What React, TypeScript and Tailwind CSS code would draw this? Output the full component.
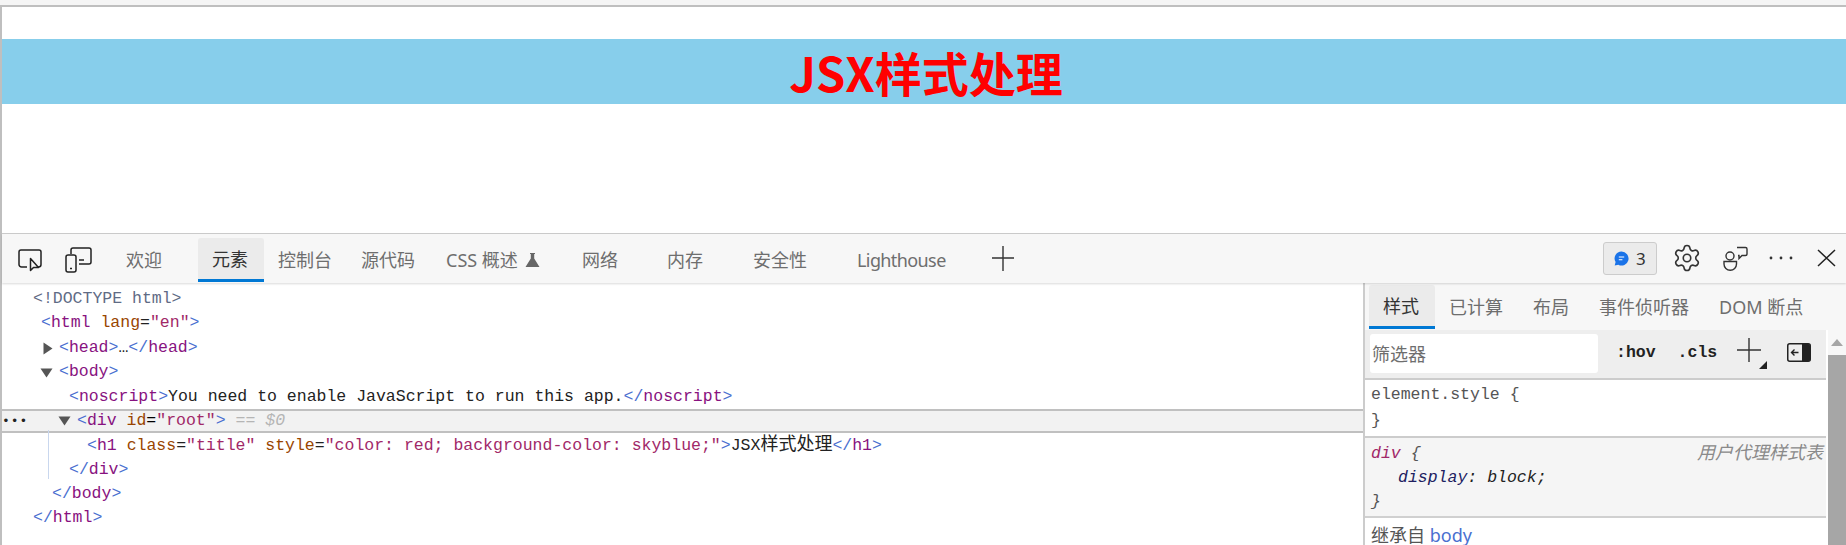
import { Settings } from "lucide-react";

const cjkSans = "font-['Segoe_UI','Noto_Sans','Noto_Sans_CJK_SC',sans-serif]";
const B = ({ children }: { children: React.ReactNode }) => <span className="text-[#4a6fd0]">{children}</span>;
const N = ({ children }: { children: React.ReactNode }) => <span className="text-[#881280]">{children}</span>;
const A = ({ children }: { children: React.ReactNode }) => <span className="text-[#994500]">{children}</span>;
const V = ({ children }: { children: React.ReactNode }) => <span className="text-[#a12868]">{children}</span>;

const Down = () => (
  <svg width="13" height="10" viewBox="0 0 13 10" className="shrink-0"><path d="M0.5 0.5H12.5L6.5 9.5Z" fill="#555" /></svg>
);
const Right = () => (
  <svg width="10" height="13" viewBox="0 0 10 13" className="shrink-0"><path d="M0.5 0.5V12.5L9.5 6.5Z" fill="#555" /></svg>
);

function Tab({ label, w, active, children }: { label: string; w: string; active?: boolean; children?: React.ReactNode }) {
  return (
    <div className={`${w} ${active ? "bg-[#ebebeb] text-[#333] border-b-[3px] border-[#0078d4] rounded-t-[3px]" : "text-[#6e6e6e]"} h-[44px] pl-[14px] flex items-center text-[18px] leading-none whitespace-nowrap`}>
      {label}
      {children}
    </div>
  );
}

function CodeLine({ pad, children }: { pad: string; children: React.ReactNode }) {
  return <div className={`${pad} h-[24.45px] flex items-center whitespace-pre text-[16.5px] leading-none text-[#222]`}>{children}</div>;
}

export default function App() {
  return (
    <div className={`w-[1846px] h-[545px] overflow-hidden bg-white flex flex-col ${cjkSans}`}>
      <div className="h-[5px] bg-[#f5f5f5]" />
      <div className="h-[2px] bg-[#bfbfbf]" />
      <div className="flex-1 min-h-0 flex flex-col border-l-2 border-[#bfbfbf]">
        <div className="h-[226px] pt-[32px] shrink-0">
          <h1 className="h-[65px] bg-[#87ceeb] pl-[4px] text-[#ff0000] text-center text-[47px] leading-[65px] font-bold font-['Noto_Sans_CJK_SC',sans-serif]">JSX样式处理</h1>
        </div>
        <div className="flex-1 min-h-0 flex flex-col border-t border-[#cccccc]">
          {/* toolbar */}
          <div className="h-[49px] shrink-0 bg-[#f7f7f7] flex items-end pb-[1px] relative shadow-[0_1px_2px_rgba(0,0,0,0.15)] z-10">
            <div className="w-[110px] h-[44px] flex items-center pl-[16px] gap-[22px] shrink-0">
              <svg width="25" height="24" viewBox="0 0 25 24" fill="none" stroke="#222" strokeWidth="1.5">
                <path d="M9 19H3.5a2.5 2.5 0 0 1-2.5-2.5V4a2 2 0 0 1 2-2h18a2 2 0 0 1 2 2v12.5a2.5 2.5 0 0 1-2.5 2.5H20" />
                <path d="M12.5 10.5V22.5L15.5 19.5H20.5Z" strokeLinejoin="round" />
              </svg>
              <svg width="27" height="26" viewBox="0 0 27 26" fill="none" stroke="#222" strokeWidth="1.5">
                <path d="M6 7V3a2 2 0 0 1 2-2h16a2 2 0 0 1 2 2v12a2 2 0 0 1-2 2H14" />
                <rect x="1" y="8" width="10" height="17" rx="2" />
                <path d="M5 21.5h2M14 13h5" />
              </svg>
            </div>
            <Tab label="欢迎" w="w-[86px]" />
            <Tab label="元素" w="w-[66px]" active />
            <Tab label="控制台" w="w-[83px]" />
            <Tab label="源代码" w="w-[85px]" />
            <Tab label="CSS 概述" w="w-[136px]">
              <svg width="15" height="16" viewBox="0 0 15 16" className="ml-[7px]"><path d="M5 1h5v1h-.8v4.5L14.5 15H.5L5.8 6.5V2H5Z" fill="#666" /></svg>
            </Tab>
            <Tab label="网络" w="w-[85px]" />
            <Tab label="内存" w="w-[86px]" />
            <Tab label="安全性" w="w-[104px]" />
            <div className="w-[148px] h-[44px] pl-[14px] flex items-center text-[18px] leading-none tracking-[-0.6px] text-[#6e6e6e]">Lighthouse</div>
            <div className="h-[44px] flex items-center">
              <svg width="24" height="26" viewBox="0 0 24 26" stroke="#333" strokeWidth="1.4" className="mb-[4px]"><path d="M1 13h22M12 1v25" /></svg>
            </div>
            <div className="ml-auto h-full flex items-center pr-[10px] text-[#333]">
              <div className="w-[54px] h-[33px] bg-[#ebebeb] border border-[#ccc] rounded-[3px] flex items-center pl-[10px] gap-[7px] text-[17px]">
                <svg width="15" height="15" viewBox="0 0 15 15"><path d="M7.5 0.5a7 7 0 1 1-3.2 13.2L0.7 14.5l.9-3.4A7 7 0 0 1 7.5 0.5Z" fill="#1a73e8" /><path d="M4.8 6h5.4M4.8 8.8h3.6" stroke="#fff" strokeWidth="1.1" /></svg>
                <span className="leading-none">3</span>
              </div>
              <Settings size={30} strokeWidth={1.3} color="#333" className="ml-[15px]" />
              <svg width="25" height="25" viewBox="0 0 25 25" fill="none" stroke="#333" strokeWidth="1.4" className="ml-[21px]">
                <circle cx="7" cy="10" r="4" />
                <path d="M1 15.5h12.5v2.5a6 6 0 0 1-12.5 0Z" />
                <path d="M14 1.5h8.5a1.5 1.5 0 0 1 1.5 1.5v5a1.5 1.5 0 0 1-1.5 1.5H19l-3 3v-3h-1" />
              </svg>
              <svg width="24" height="4" viewBox="0 0 24 4" fill="#333" className="ml-[21px]"><circle cx="2" cy="2" r="1.4" /><circle cx="12" cy="2" r="1.4" /><circle cx="22" cy="2" r="1.4" /></svg>
              <svg width="19" height="18" viewBox="0 0 19 18" stroke="#222" strokeWidth="1.5" className="ml-[24px]"><path d="M1 1l17 16M18 1L1 17" /></svg>
            </div>
          </div>
          <div className="flex-1 min-h-0 flex">
            {/* elements tree */}
            <div className="flex-1 min-w-0 pt-[4px] font-['Liberation_Mono','Noto_Sans_CJK_SC',monospace] relative">
              <CodeLine pad="pl-[31px]"><span className="text-[#5f6b85]">&lt;!DOCTYPE html&gt;</span></CodeLine>
              <CodeLine pad="pl-[39px]"><span><B>&lt;</B><N>html</N> <A>lang</A>=<V>"en"</V><B>&gt;</B></span></CodeLine>
              <CodeLine pad="pl-[41px]"><Right /><span className="ml-[6px]"><B>&lt;</B><N>head</N><B>&gt;</B>…<B>&lt;/</B><N>head</N><B>&gt;</B></span></CodeLine>
              <CodeLine pad="pl-[38px]"><Down /><span className="ml-[6px]"><B>&lt;</B><N>body</N><B>&gt;</B></span></CodeLine>
              <CodeLine pad="pl-[67px]"><span><B>&lt;</B><N>noscript</N><B>&gt;</B>You need to enable JavaScript to run this app.<B>&lt;/</B><N>noscript</N><B>&gt;</B></span></CodeLine>
              <div className="h-[24px] bg-[#f2f2f2] border-y-2 border-[#c0c0c0] flex items-center whitespace-pre text-[16.5px] leading-none">
                <span className="w-[56px] text-[13px] tracking-[1px] text-[#222]">•••</span>
                <Down />
                <span className="ml-[6px]"><B>&lt;</B><N>div</N> <A>id</A>=<V>"root"</V><B>&gt;</B></span>
                <span className="ml-[10px] italic text-[#b5b5b5]">== $0</span>
              </div>
              <div className="ml-[46px] w-[1px] h-[49px] bg-[#c9d7ee] absolute top-[147px]" />
              <CodeLine pad="pl-[85px]">
                <span><B>&lt;</B><N>h1</N> <A>class</A>=<V>"title"</V> <A>style</A>=<V>"color: red; background-color: skyblue;"</V><B>&gt;</B>JSX<span className="text-[18px]">样式处理</span><B>&lt;/</B><N>h1</N><B>&gt;</B></span>
              </CodeLine>
              <CodeLine pad="pl-[67px]"><span><B>&lt;/</B><N>div</N><B>&gt;</B></span></CodeLine>
              <CodeLine pad="pl-[50px]"><span><B>&lt;/</B><N>body</N><B>&gt;</B></span></CodeLine>
              <CodeLine pad="pl-[31px]"><span><B>&lt;/</B><N>html</N><B>&gt;</B></span></CodeLine>
            </div>
            {/* styles sidebar */}
            <div className="w-[483px] shrink-0 border-l-2 border-[#cccccc] flex flex-col">
              <div className="h-[47px] shrink-0 bg-[#f7f7f7] pl-[4px] flex items-end pb-[1px]">
                <Tab label="样式" w="w-[66px]" active />
                <Tab label="已计算" w="w-[84px]" />
                <Tab label="布局" w="w-[66px]" />
                <Tab label="事件侦听器" w="w-[120px]" />
                <Tab label="DOM 断点" w="w-[110px]" />
              </div>
              <div className="flex-1 min-h-0 flex">
                <div className="flex-1 min-w-0 flex flex-col">
                  <div className="h-[50px] shrink-0 bg-[#eeeeee] border-b-2 border-[#cccccc] flex items-center pl-[5px] pb-[1px]">
                    <div className="w-[228px] h-[39px] bg-white rounded-[3px] pl-[2px] flex items-center text-[18px] text-[#6e6e6e] leading-none">筛选器</div>
                    <span className="ml-[18px] text-[16.5px] font-bold text-[#222] font-['Liberation_Mono',monospace]">:hov</span>
                    <span className="ml-[22px] text-[16.5px] font-bold text-[#222] font-['Liberation_Mono',monospace]">.cls</span>
                    <div className="ml-[20px] relative w-[30px] h-[30px]">
                      <svg width="24" height="24" viewBox="0 0 24 24" stroke="#333" strokeWidth="1.4" className="mt-[-1px]"><path d="M0 12h24M12 0v24" /></svg>
                      <svg width="8" height="8" viewBox="0 0 8 8" className="absolute left-[22px] top-[22px]"><path d="M8 0V8H0Z" fill="#222" /></svg>
                    </div>
                    <svg width="24" height="19" viewBox="0 0 24 19" className="ml-[20px] mb-[3px]">
                      <rect x="0.75" y="0.75" width="22.5" height="17.5" rx="2" fill="none" stroke="#222" strokeWidth="1.5" />
                      <path d="M15 1h6.5a1.5 1.5 0 0 1 1.5 1.5v14a1.5 1.5 0 0 1-1.5 1.5H15Z" fill="#222" />
                      <path d="M11.5 9.5H5M7.5 6.5l-3 3 3 3" fill="none" stroke="#222" strokeWidth="1.4" />
                    </svg>
                  </div>
                  <div className="font-['Liberation_Mono','Noto_Sans_CJK_SC',monospace] text-[16.5px] leading-[26px] text-[#555]">
                    <div className="h-[58px] pt-[2px] pl-[6px] border-b-2 border-[#cccccc]">
                      <div>element.style {"{"}</div>
                      <div>{"}"}</div>
                    </div>
                    <div className="h-[80px] bg-[#f5f5f5] pt-[4px] pl-[6px] border-b-2 border-[#d0d0d0] leading-[24px] italic relative">
                      <div><span className="text-[#a12868]">div</span> {"{"}</div>
                      <div className="pl-[27px] text-[#202060]">display<span className="text-[#222]">:</span> <span className="text-[#222]">block</span><span className="text-[#222]">;</span></div>
                      <div>{"}"}</div>
                      <span className={`absolute right-[3px] top-[2px] text-[18px] text-[#8a8a8a] ${cjkSans}`}>用户代理样式表</span>
                    </div>
                    <div className={`pl-[6px] pt-[5px] text-[18px] leading-[24px] text-[#555] ${cjkSans}`}>继承自 <span className="text-[#4a6fd0]">body</span></div>
                  </div>
                </div>
                <div className="w-[20px] shrink-0 pl-[2px] flex flex-col">
                  <div className="h-[25px] bg-[#f7f7f7] flex justify-center pt-[9px]">
                    <svg width="12" height="7" viewBox="0 0 12 7"><path d="M6 0l6 7H0Z" fill="#a6a6a6" /></svg>
                  </div>
                  <div className="flex-1 bg-[#a6a6a6]" />
                </div>
              </div>
            </div>
          </div>
        </div>
      </div>
    </div>
  );
}
